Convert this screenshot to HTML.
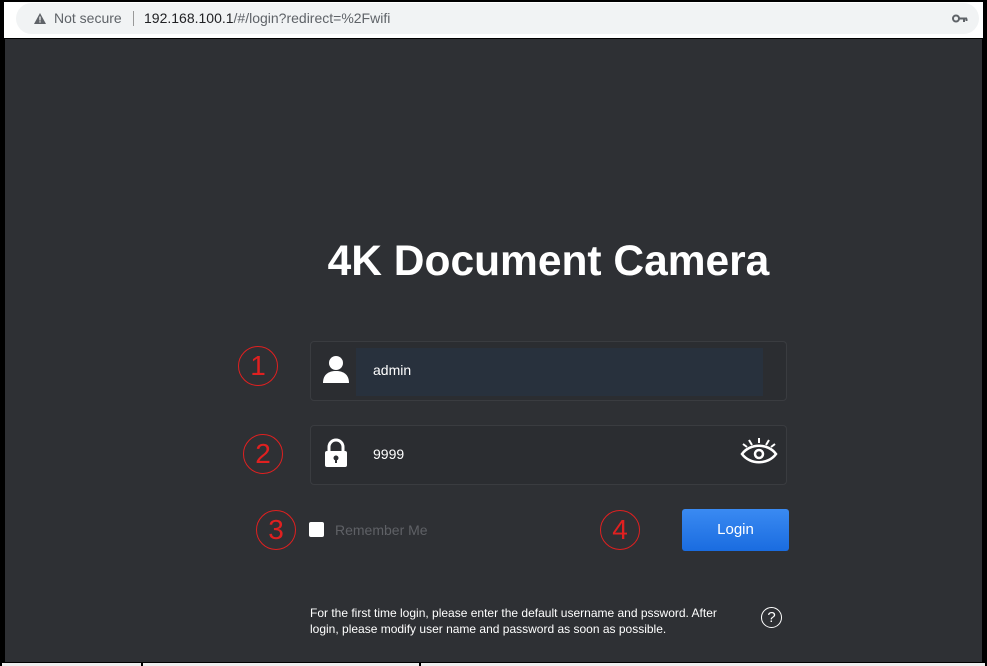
<!DOCTYPE html>
<html><head><style>
*{margin:0;padding:0;box-sizing:border-box}
body{width:987px;height:666px;background:#000;position:relative;overflow:hidden;font-family:"Liberation Sans",sans-serif}
.top{position:absolute;left:4px;top:2px;width:979px;height:36px;background:#fff}
.url{position:absolute;left:12px;top:1px;width:963px;height:31px;background:#f1f3f4;border-radius:16px;font-size:14px;color:#202124;line-height:31px}
.main{position:absolute;left:5px;top:39px;width:977px;height:623px;background:#2e3034}
.bot{position:absolute;left:2px;top:663px;width:983px;height:3px;background:#eee}
h1{position:absolute;left:0;width:1097px;text-align:center;top:238px;color:#fff;font-size:42.5px;font-weight:bold}
.field{position:absolute;left:310px;width:477px;height:60px;border:1px solid #3a3c40;border-radius:4px;background:#2b2d31}
.num{position:absolute;width:40px;height:40px;border:1.5px solid #e02020;border-radius:50%;color:#e02020;font-size:28px;text-align:center;line-height:38px;font-family:"Liberation Sans",sans-serif}
.txt{position:absolute;color:#fff;font-size:14px}
</style></head><body>
<div class="top"><div class="url">
<svg style="position:absolute;left:18px;top:10px" width="12" height="11" viewBox="0 0 12 11"><path d="M6 0L12 11H0Z" fill="#5f6368"/><rect x="5.4" y="3.5" width="1.2" height="4" fill="#fff"/><rect x="5.4" y="8.3" width="1.2" height="1.2" fill="#fff"/></svg>
<span style="position:absolute;left:38px;color:#5f6368">Not secure</span>
<span style="position:absolute;left:117px;top:8px;width:1px;height:15px;background:#999"></span>
<span style="position:absolute;left:128px">192.168.100.1<span style="color:#5f6368">/#/login?redirect=%2Fwifi</span></span>
<svg style="position:absolute;left:936px;top:11px" width="16" height="9" viewBox="0 0 16 9"><circle cx="4" cy="4.5" r="3" fill="none" stroke="#5f6368" stroke-width="2"/><path d="M7 4.5H15M12 4.5V8M14.5 4.5V7" stroke="#5f6368" stroke-width="2"/></svg>
</div></div>
<div class="main"></div>
<div class="bot"></div>
<div style="position:absolute;left:141px;top:662px;width:2px;height:4px;background:#000"></div>
<div style="position:absolute;left:419px;top:662px;width:2px;height:4px;background:#000"></div>
<h1>4K Document Camera</h1>
<div class="field" style="top:341px"><div style="position:absolute;left:45px;top:6px;width:407px;height:48px;background:#28313d"></div></div>
<svg style="position:absolute;left:322px;top:354px" width="28" height="30" viewBox="0 0 28 30"><circle cx="14" cy="9" r="7" fill="#fff"/><path d="M1 29C1 21 6 17 14 17S27 21 27 29Z" fill="#fff"/></svg>
<div class="txt" style="left:373px;top:362px">admin</div>
<div class="field" style="top:425px"></div>
<svg style="position:absolute;left:323px;top:438px" width="26" height="30" viewBox="0 0 26 30"><path d="M6 14V9a7 7 0 0 1 14 0v5" fill="none" stroke="#fff" stroke-width="3"/><rect x="2" y="13" width="22" height="16" rx="2" fill="#fff"/><circle cx="13" cy="20" r="2.5" fill="#2b2d31"/><rect x="12" y="20" width="2" height="5" fill="#2b2d31"/></svg>
<div class="txt" style="left:373px;top:446px">9999</div>
<svg style="position:absolute;left:740px;top:436px" width="38" height="30" viewBox="0 0 38 30"><path d="M2 18C10 7 28 7 36 18C28 29 10 29 2 18Z" fill="none" stroke="#fff" stroke-width="2.5"/><circle cx="19" cy="18" r="4" fill="none" stroke="#fff" stroke-width="2.5"/><path d="M19 2V7M9 4L12 9M29 4L26 9M3 8L7 11M35 8L31 11" stroke="#fff" stroke-width="2"/></svg>
<div class="num" style="left:238px;top:346px">1</div>
<div class="num" style="left:243px;top:434px">2</div>
<div class="num" style="left:256px;top:510px">3</div>
<div class="num" style="left:600px;top:510px">4</div>
<div style="position:absolute;left:309px;top:522px;width:15px;height:15px;background:#fff;border-radius:2px"></div>
<div style="position:absolute;left:335px;top:522px;color:#5f6166;font-size:14px">Remember Me</div>
<div style="position:absolute;left:682px;top:509px;width:107px;height:42px;border-radius:3px;background:linear-gradient(#3a8af2,#1a6ce0);color:#fff;font-size:15px;text-align:center;line-height:42px">Login</div>
<div style="position:absolute;left:310px;top:605px;color:#fff;font-size:12px;line-height:16px;white-space:nowrap">For the first time login, please enter the default username and pssword. After<br>login, please modify user name and password as soon as possible.</div>
<div style="position:absolute;left:761px;top:607px;width:21px;height:21px;border:1.5px solid #fff;border-radius:50%;color:#fff;font-size:15px;text-align:center;line-height:19px">?</div>
</body></html>
